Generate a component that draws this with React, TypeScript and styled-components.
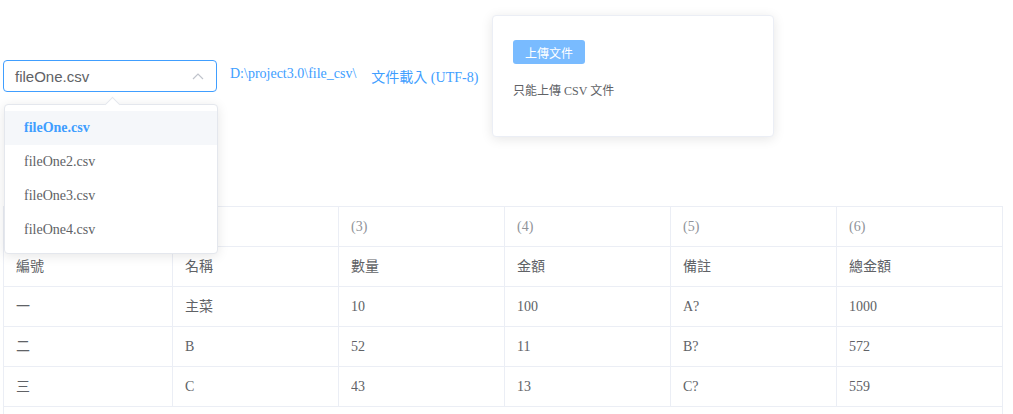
import styled, { createGlobalStyle } from "styled-components";

const GlobalStyle = createGlobalStyle`
    body {
        margin: 0;
        background: #fff;
        font-family: "Liberation Serif", "Noto Sans CJK TC", serif;
        color: #606266;
    }
`;

const Page = styled.div`
    padding: 15px 0 0 3px;
`;

const TopRow = styled.div`
    display: flex;
    align-items: center;
`;

const SelectWrap = styled.div`
    position: relative;
    width: 214px;
`;

const SelectBox = styled.div`
    box-sizing: border-box;
    height: 32px;
    border: 1px solid #409eff;
    border-radius: 4px;
    display: flex;
    align-items: center;
    justify-content: space-between;
    padding: 0 12px 0 11px;
    font-family: "Liberation Sans", Arial, sans-serif;
    font-size: 15px;
    color: #606266;
`;

const Dropdown = styled.ul`
    position: absolute;
    top: 44px;
    left: 1px;
    width: 214px;
    box-sizing: border-box;
    margin: 0;
    padding: 6px 0;
    list-style: none;
    background: #fff;
    border: 1px solid #e4e7ed;
    border-radius: 4px;
    box-shadow: 0 2px 12px rgba(0, 0, 0, 0.1);
    z-index: 10;

    &::before {
        content: "";
        position: absolute;
        top: -6px;
        left: 102px;
        width: 10px;
        height: 10px;
        background: #fff;
        border-top: 1px solid #e4e7ed;
        border-left: 1px solid #e4e7ed;
        transform: rotate(45deg);
    }
`;

const Option = styled.li<{ $active?: boolean }>`
    position: relative;
    height: 34px;
    line-height: 34px;
    padding: 0 19px;
    font-size: 14px;
    color: ${(p) => (p.$active ? "#409eff" : "#606266")};
    font-weight: ${(p) => (p.$active ? 700 : 400)};
    background: ${(p) => (p.$active ? "#f5f7fa" : "transparent")};
`;

const Info = styled.div`
    width: 262px;
    margin-left: 13px;
    display: flex;
    gap: 15px;
    font-size: 14px;
    color: #409eff;
`;

const UploadCard = styled.div`
    box-sizing: border-box;
    width: 282px;
    height: 122px;
    padding: 24px 20px;
    border: 1px solid #ebeef5;
    border-radius: 4px;
    box-shadow: 0 2px 12px rgba(0, 0, 0, 0.1);
    background: #fff;
`;

const UploadButton = styled.button`
    width: 72px;
    height: 24px;
    border: none;
    border-radius: 3px;
    background: #79bbff;
    color: #fff;
    font-family: "Noto Sans CJK TC", sans-serif;
    font-size: 12px;
    padding: 0;
`;

const Hint = styled.div`
    margin-top: 18px;
    font-size: 12px;
    line-height: 18px;
    color: #606266;
`;

const Table = styled.table`
    margin-top: 69px;
    width: 999px;
    border-collapse: collapse;
    table-layout: fixed;
    font-size: 14px;
`;

const Cell = styled.td<{ $muted?: boolean }>`
    height: 40px;
    box-sizing: border-box;
    padding: 0 12px;
    border: 1px solid #ebeef5;
    color: ${(p) => (p.$muted ? "#909399" : "#606266")};
    vertical-align: middle;
`;

const CellText = styled.div`
    height: 20px;
    line-height: 20px;
    overflow: hidden;
    white-space: nowrap;
`;

const widths = [169, 166, 166, 166, 166, 166];
const numbers = ["(1)", "(2)", "(3)", "(4)", "(5)", "(6)"];
const titles = ["編號", "名稱", "數量", "金額", "備註", "總金額"];
const rows = [
    ["一", "主菜", "10", "100", "A?", "1000"],
    ["二", "B", "52", "11", "B?", "572"],
    ["三", "C", "43", "13", "C?", "559"],
];

const files = ["fileOne.csv", "fileOne2.csv", "fileOne3.csv", "fileOne4.csv"];

export default function App() {
    return (
        <Page>
            <GlobalStyle />
            <TopRow>
                <SelectWrap>
                    <SelectBox>
                        <span>fileOne.csv</span>
                        <svg width="12" height="8" viewBox="0 0 12 8">
                            <path d="M1 7 L6 2 L11 7" fill="none" stroke="#c0c4cc" strokeWidth="1.2" />
                        </svg>
                    </SelectBox>
                    <Dropdown>
                        {files.map((f, i) => (
                            <Option key={f} $active={i === 0}>{f}</Option>
                        ))}
                    </Dropdown>
                </SelectWrap>
                <Info>
                    <span>D:\project3.0\file_csv\</span>
                    <span>文件載入 (UTF-8)</span>
                </Info>
                <UploadCard>
                    <UploadButton>上傳文件</UploadButton>
                    <Hint>只能上傳 CSV 文件</Hint>
                </UploadCard>
            </TopRow>

            <Table>
                <colgroup>
                    {widths.map((w, i) => (
                        <col key={i} style={{ width: w }} />
                    ))}
                </colgroup>
                <tbody>
                    <tr>
                        {numbers.map((n) => (
                            <Cell key={n} $muted><CellText>{n}</CellText></Cell>
                        ))}
                    </tr>
                    <tr>
                        {titles.map((t) => (
                            <Cell key={t}><CellText>{t}</CellText></Cell>
                        ))}
                    </tr>
                    {rows.map((r) => (
                        <tr key={r[0]}>
                            {r.map((c, i) => (
                                <Cell key={i}><CellText>{c}</CellText></Cell>
                            ))}
                        </tr>
                    ))}
                    <tr>
                        <Cell colSpan={6} />
                    </tr>
                </tbody>
            </Table>
        </Page>
    );
}
